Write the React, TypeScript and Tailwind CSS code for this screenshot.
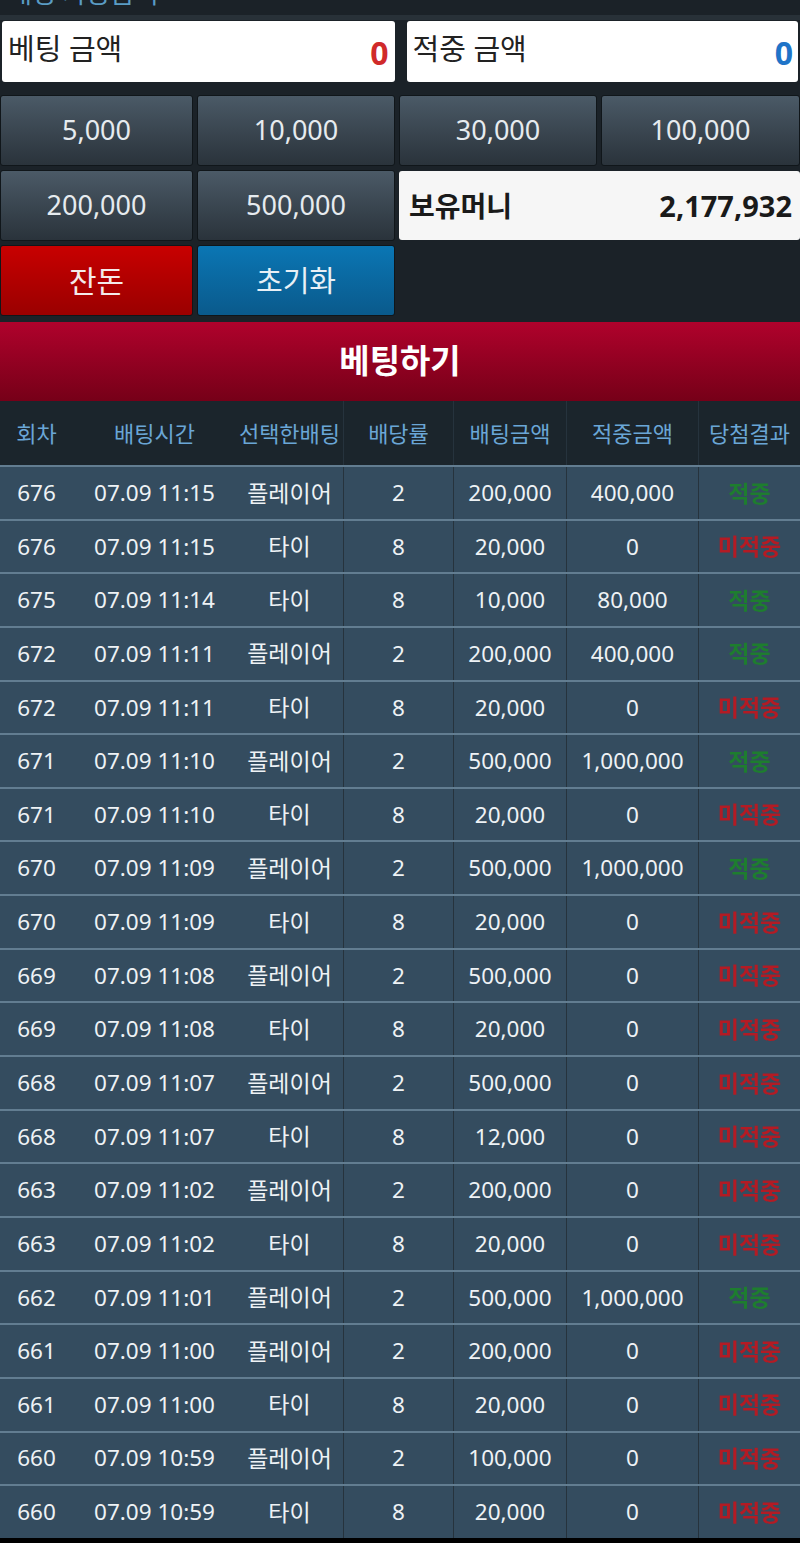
const FONT = { fontFamily: '"Noto Sans", "Noto Sans CJK KR", sans-serif' };

const amounts = ["5,000", "10,000", "30,000", "100,000"];

const rows: [string, string, string, string, string, string, boolean][] = [
  ["676", "07.09 11:15", "플레이어", "2", "200,000", "400,000", true],
  ["676", "07.09 11:15", "타이", "8", "20,000", "0", false],
  ["675", "07.09 11:14", "타이", "8", "10,000", "80,000", true],
  ["672", "07.09 11:11", "플레이어", "2", "200,000", "400,000", true],
  ["672", "07.09 11:11", "타이", "8", "20,000", "0", false],
  ["671", "07.09 11:10", "플레이어", "2", "500,000", "1,000,000", true],
  ["671", "07.09 11:10", "타이", "8", "20,000", "0", false],
  ["670", "07.09 11:09", "플레이어", "2", "500,000", "1,000,000", true],
  ["670", "07.09 11:09", "타이", "8", "20,000", "0", false],
  ["669", "07.09 11:08", "플레이어", "2", "500,000", "0", false],
  ["669", "07.09 11:08", "타이", "8", "20,000", "0", false],
  ["668", "07.09 11:07", "플레이어", "2", "500,000", "0", false],
  ["668", "07.09 11:07", "타이", "8", "12,000", "0", false],
  ["663", "07.09 11:02", "플레이어", "2", "200,000", "0", false],
  ["663", "07.09 11:02", "타이", "8", "20,000", "0", false],
  ["662", "07.09 11:01", "플레이어", "2", "500,000", "1,000,000", true],
  ["661", "07.09 11:00", "플레이어", "2", "200,000", "0", false],
  ["661", "07.09 11:00", "타이", "8", "20,000", "0", false],
  ["660", "07.09 10:59", "플레이어", "2", "100,000", "0", false],
  ["660", "07.09 10:59", "타이", "8", "20,000", "0", false],
];

const headers = ["회차", "배팅시간", "선택한배팅", "배당률", "배팅금액", "적중금액", "당첨결과"];
const cols = "grid grid-cols-[73px_163px_107px_110px_113px_132px_102px]";
// only the right-hand columns show a divider
const divider = (i: number) => (i >= 3 ? "border-l border-[#26333d]" : "");

function GrayButton({ label }: { label: string }) {
  return (
    <button className="h-[71px] rounded-[3px] border border-[#10161a] bg-gradient-to-b from-[#4b5a67] to-[#2a333b] text-[27px] text-[#e6ebef]">
      {label}
    </button>
  );
}

export default function App() {
  return (
    <div className="w-[800px] h-[1543px] bg-black overflow-hidden" style={FONT}>
      <div className="bg-[#1b2228]">
        {/* caption scrolled mostly out of view */}
        <div className="h-[15px] overflow-hidden relative">
          <div className="absolute left-[8px] top-[-22px] text-[26px] leading-[30px] text-[#5a9cc4]">배팅 가능금액</div>
        </div>
        <div className="h-[5px] bg-[#283138]" />

        <div className="flex gap-[12px] px-[2px] pt-[1px]">
          <div className="flex-1 h-[61px] rounded-[3px] bg-white flex items-center justify-between pl-[6px] pr-[6px]">
            <span className="text-[29px] text-[#222] -mt-[6px]">베팅 금액</span>
            <span className="text-[32px] font-bold text-[#d02a2a] mt-[2px]">0</span>
          </div>
          <div className="flex-1 h-[61px] rounded-[3px] bg-white flex items-center justify-between pl-[6px] pr-[5px]">
            <span className="text-[29px] text-[#222] -mt-[6px]">적중 금액</span>
            <span className="text-[32px] font-bold text-[#1f74c8] mt-[2px]">0</span>
          </div>
        </div>

        <div className="grid grid-cols-[193px_198px_198px_1fr] gap-[4px] mt-[13px]">
          {amounts.map((a) => (
            <GrayButton key={a} label={a} />
          ))}
          <GrayButton label="200,000" />
          <GrayButton label="500,000" />
          <div className="col-span-2 my-[1px] h-[69px] rounded-[3px] bg-[#f6f6f6] flex items-center justify-between pl-[10px] pr-[8px]">
            <span className="text-[28px] font-bold text-[#1a1a1a]">보유머니</span>
            <span className="text-[29px] font-bold text-[#1a1a1a]">2,177,932</span>
          </div>
          <button className="h-[71px] rounded-[3px] border border-[#10161a] bg-gradient-to-b from-[#c80000] to-[#9a0000] text-[30px] text-[#f4eaea]">
            잔돈
          </button>
          <button className="h-[71px] rounded-[3px] border border-[#10161a] bg-gradient-to-b from-[#0a76b4] to-[#0a5a8c] text-[29px] text-[#e8f0f6]">
            초기화
          </button>
        </div>
        <div className="h-[6px]" />
      </div>

      <div className="h-[79px] bg-gradient-to-b from-[#b0022c] to-[#760018] flex items-center justify-center">
        <span className="text-[33px] font-bold text-white -mt-[2px]">베팅하기</span>
      </div>

      <div className={`${cols} h-[64px] bg-[#1b252c]`}>
        {headers.map((h, i) => (
          <div key={h} className={`flex items-center justify-center text-[22px] text-[#6aa6d6] ${divider(i)}`}>
            {h}
          </div>
        ))}
      </div>

      {rows.map((r, idx) => (
        <div key={idx} className={`${cols} h-[53.65px] bg-[#344c5f] border-t-2 border-[#627d91] text-[22.5px] text-[#eef2f5]`}>
          {r.slice(0, 6).map((c, i) => (
            <div key={i} className={`flex items-center justify-center ${i === 2 ? "text-[23px]" : ""} ${divider(i)}`}>
              {c as string}
            </div>
          ))}
          <div className={`flex items-center justify-center text-[23px] font-bold blur-[0.6px] ${divider(6)} ${r[6] ? "text-[#1e7d2f]" : "text-[#b31b24]"}`}>
            {r[6] ? "적중" : "미적중"}
          </div>
        </div>
      ))}
    </div>
  );
}
